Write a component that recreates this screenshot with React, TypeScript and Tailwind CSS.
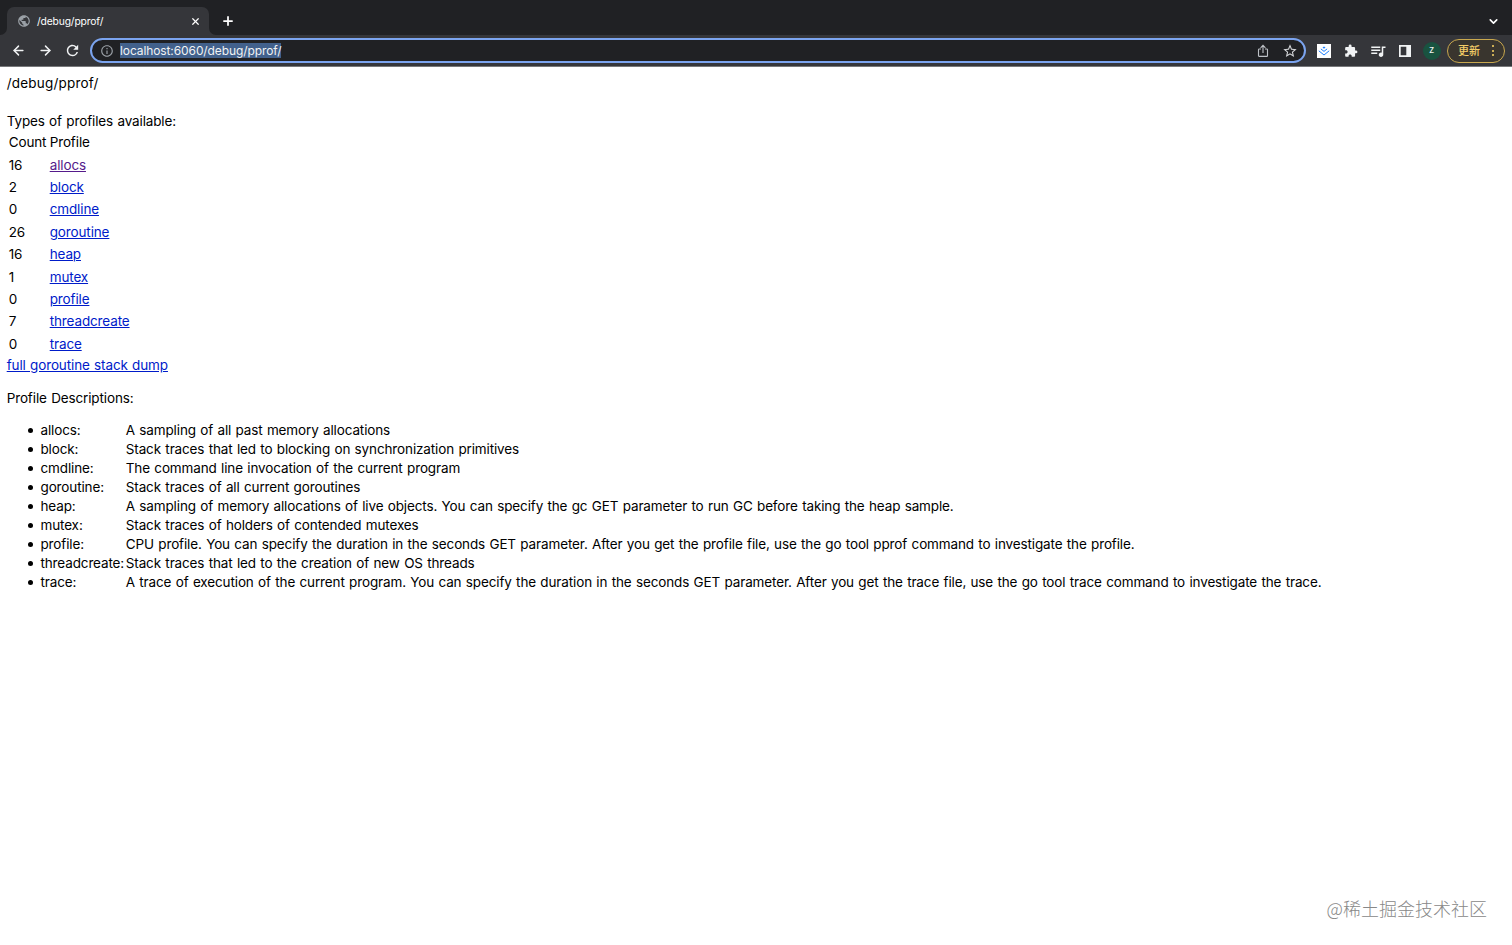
import React from 'react'
import { ArrowLeft, ArrowRight, ChevronDown, Plus, X } from 'lucide-react'
import { MdExtension, MdOutlineInfo, MdPublic, MdQueueMusic, MdRefresh, MdStarOutline } from 'react-icons/md'

const PROFILES = [
  { name: 'allocs', count: 16, visited: true, desc: 'A sampling of all past memory allocations' },
  { name: 'block', count: 2, desc: 'Stack traces that led to blocking on synchronization primitives' },
  { name: 'cmdline', count: 0, desc: 'The command line invocation of the current program' },
  { name: 'goroutine', count: 26, desc: 'Stack traces of all current goroutines' },
  {
    name: 'heap',
    count: 16,
    desc: 'A sampling of memory allocations of live objects. You can specify the gc GET parameter to run GC before taking the heap sample.',
  },
  { name: 'mutex', count: 1, desc: 'Stack traces of holders of contended mutexes' },
  {
    name: 'profile',
    count: 0,
    desc: 'CPU profile. You can specify the duration in the seconds GET parameter. After you get the profile file, use the go tool pprof command to investigate the profile.',
  },
  { name: 'threadcreate', count: 7, desc: 'Stack traces that led to the creation of new OS threads' },
  {
    name: 'trace',
    count: 0,
    desc: 'A trace of execution of the current program. You can specify the duration in the seconds GET parameter. After you get the trace file, use the go tool trace command to investigate the trace.',
  },
]

const ShareIcon = () => (
  <svg className="h-[14px] w-[12px]" viewBox="0 0 12 14" fill="none" stroke="#bdc1c6" strokeWidth="1.1">
    <path d="M4 5H2.2a.7.7 0 0 0-.7.7v6a.7.7 0 0 0 .7.7h7.6a.7.7 0 0 0 .7-.7v-6a.7.7 0 0 0-.7-.7H8M6 9V1.6M3.6 3.8 6 1.4l2.4 2.4" />
  </svg>
)

const JuejinIcon = () => (
  <svg className="h-[14px] w-[14px]" viewBox="0 0 14 14" fill="none">
    <path fill="#fff" d="M0 0h14v14H0z" />
    <path fill="#1e80ff" d="m7 2.4 1.5 1.2L7 4.8 5.5 3.6z" />
    <path stroke="#1e80ff" d="M3.9 4.9 7 7.4l3.1-2.5M1.8 6.8 7 11l5.2-4.2" />
  </svg>
)

const SidePanelIcon = () => (
  <svg className="h-[12px] w-[12px]" viewBox="0 0 12 12" fill="#f1f3f4">
    <path fillRule="evenodd" d="M0 0h12v12H0zM1.7 1.7v8.6h5.6V1.7z" />
  </svg>
)

// Concave foot of the active tab; flipped for the left side
const TabFoot = ({ className }: { className: string }) => (
  <svg className={className} viewBox="0 0 7 7" fill="#35363a">
    <path d="M0 0a7 7 0 0 0 7 7H0z" />
  </svg>
)

const TabStrip = () => (
  <div className="flex h-[35px] items-end bg-[#202124]">
    <TabFoot className="h-[7px] w-[7px] -scale-x-100" />
    <div className="flex h-[28px] w-[202px] items-center rounded-t-[7px] bg-[#35363a] pl-[10px] pr-[8px] text-white">
      <MdPublic className="h-[14px] w-[14px] text-[#9aa0a6]" />
      <span className="ml-[6px] flex-1 pt-px text-[10.3px] tracking-[-0.15px]">/debug/pprof/</span>
      <X className="h-[11px] w-[11px]" strokeWidth={2.6} />
    </div>
    <TabFoot className="h-[7px] w-[7px]" />
    <div className="flex h-[28px] flex-1 items-center justify-between pl-[5px] pr-[12px] text-white">
      <Plus className="h-[14px] w-[14px]" strokeWidth={3} />
      <ChevronDown className="h-[13px] w-[13px]" strokeWidth={3} />
    </div>
  </div>
)

const Toolbar = () => (
  <div className="flex h-[32px] items-center border-b border-[#77787a] bg-[#35363a] pl-[11px] pr-[7px] text-[#f1f3f4]">
    <ArrowLeft className="h-[15px] w-[15px]" strokeWidth={2.3} />
    <ArrowRight className="ml-[12px] h-[15px] w-[15px]" strokeWidth={2.3} />
    <MdRefresh className="ml-[11px] h-[17px] w-[17px]" />
    <div className="ml-[9px] flex h-[25px] w-[1216px] items-center rounded-full border-2 border-[#7ba4ef] bg-[#202124] pl-[8px] pr-[6px]">
      <MdOutlineInfo className="h-[14px] w-[14px] text-[#9aa0a6]" />
      <span className="ml-[6px] bg-[#42618c] text-[12px] leading-[15px] tracking-[-0.1px] text-[#f1f3f4]">
        localhost:6060/debug/pprof/
      </span>
      <div className="ml-auto flex items-center gap-[13px]">
        <ShareIcon />
        <MdStarOutline className="h-[16px] w-[16px] text-[#d5d7da]" />
      </div>
    </div>
    <div className="ml-[4px] grid grid-cols-[repeat(5,27px)] place-items-center">
      <JuejinIcon />
      <MdExtension className="h-[14px] w-[14px]" />
      <MdQueueMusic className="h-[18px] w-[18px]" />
      <SidePanelIcon />
      <span className="flex h-[18px] w-[18px] items-center justify-center rounded-full bg-[#195340] text-[9.5px]">z</span>
    </div>
    <div className="ml-auto flex h-[24px] w-[58px] items-center justify-between rounded-full border border-[#c9a84e] bg-[#39352e] pl-[10px] pr-[10px] font-['Noto_Sans_CJK_SC',sans-serif] text-[11px] font-medium text-[#f3cc67]">
      更新
      <span className="flex flex-col gap-[2.5px]">
        <i className="h-[2px] w-[2px] rounded-full bg-[#fdd663]" />
        <i className="h-[2px] w-[2px] rounded-full bg-[#fdd663]" />
        <i className="h-[2px] w-[2px] rounded-full bg-[#fdd663]" />
      </span>
    </div>
  </div>
)

export default function App() {
  return (
    <div className="relative flex h-[945px] w-[1512px] flex-col overflow-hidden bg-white font-['Inter','Liberation_Sans',sans-serif]">
      <TabStrip />
      <Toolbar />
      <main className="whitespace-nowrap px-[6.7px] pt-[7px] text-[13.5px] leading-[19px] tracking-[-0.13px] text-black [word-spacing:0.7px]">
        <p className="tracking-[0.2px]">/debug/pprof/</p>
        <p className="mt-[19px]">Types of profiles available:</p>
        <table className="border-separate border-spacing-x-[2px] border-spacing-y-0">
          <thead>
            <tr className="h-[23px]">
              <td className="w-[39px]">Count</td>
              <td>Profile</td>
            </tr>
          </thead>
          <tbody>
            {PROFILES.map((p) => (
              <tr key={p.name} className="h-[22.4px]">
                <td>{p.count}</td>
                <td>
                  <a className={p.visited ? 'text-[#551a8b] underline' : 'text-[#001bc9] underline'}>{p.name}</a>
                </td>
              </tr>
            ))}
          </tbody>
        </table>
        <a className="block text-[#001bc9] underline">full goroutine stack dump</a>
        <p className="mt-[14px]">Profile Descriptions:</p>
        <ul className="mt-[13px]">
          {PROFILES.map((p) => (
            <li key={p.name} className="flex items-center">
              <span className="ml-[21.3px] h-[5px] w-[5px] rounded-full bg-black" />
              <span className="ml-[7.5px] w-[85.3px]">{p.name}:</span>
              <span>{p.desc}</span>
            </li>
          ))}
        </ul>
      </main>
      <div className="absolute bottom-[24px] right-[25px] font-['Noto_Sans_CJK_SC',sans-serif] text-[18px] font-light leading-[26px] text-[#888]">
        @稀土掘金技术社区
      </div>
    </div>
  )
}
